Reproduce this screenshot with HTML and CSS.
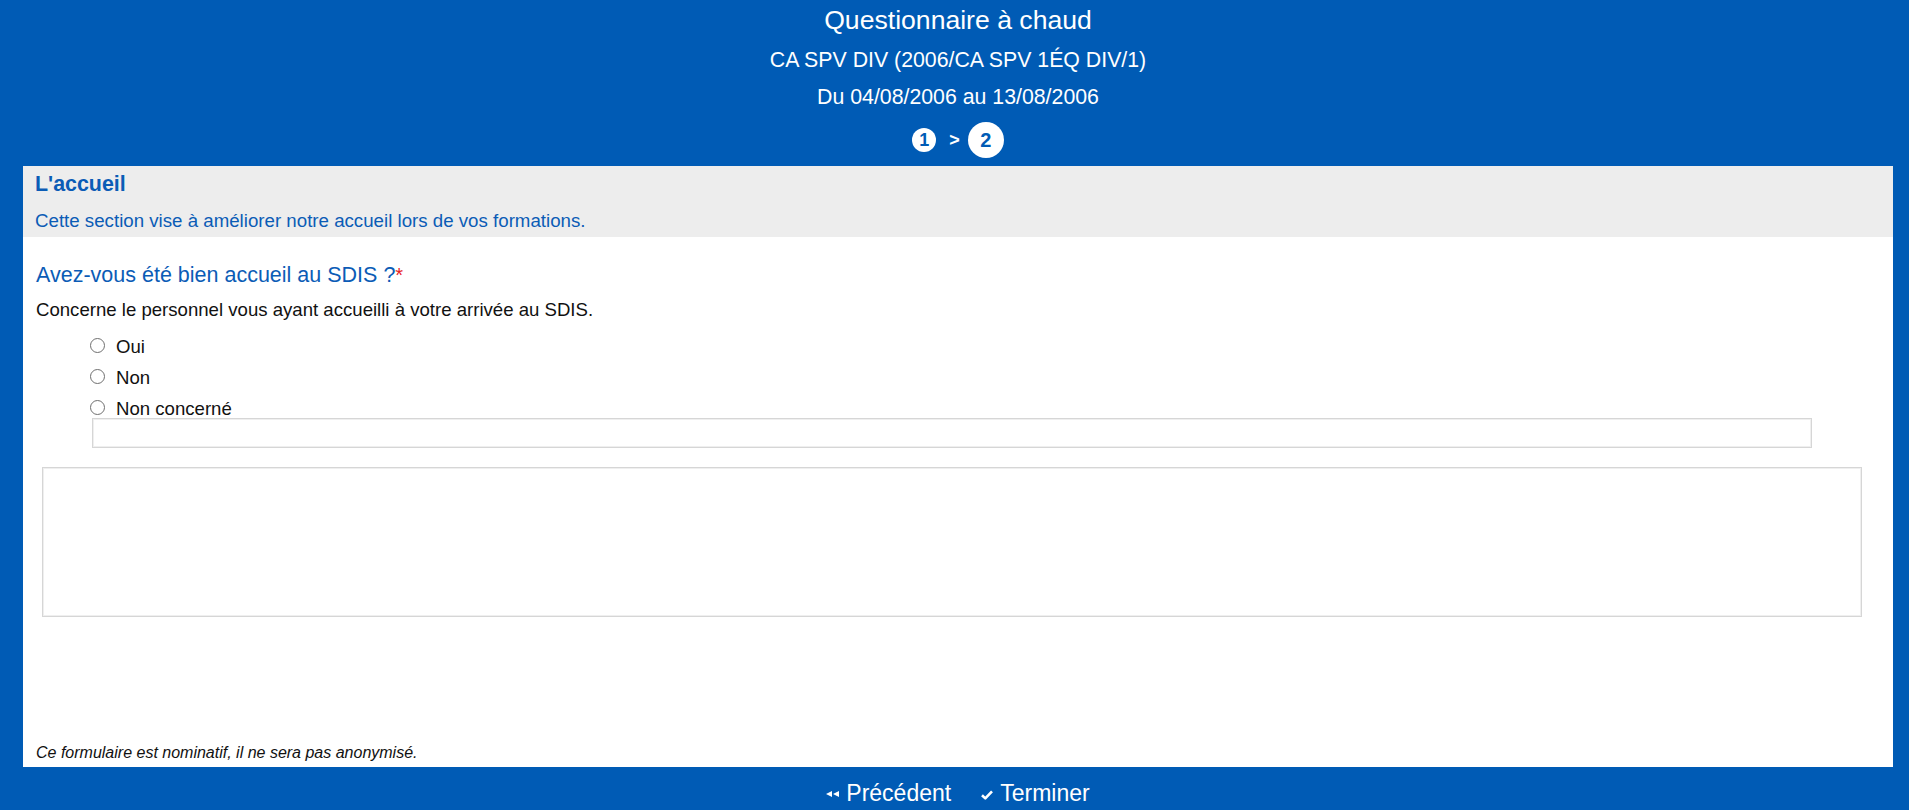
FILE: index.html
```html
<!DOCTYPE html>
<html lang="fr">
<head>
<meta charset="utf-8">
<title>Questionnaire à chaud</title>
<link rel="stylesheet" href="styles.css">
</head>
<body>
<div class="page">
  <header class="head">
    <h1 class="title">Questionnaire à chaud</h1>
    <p class="sub sub-first">CA SPV DIV (2006/CA SPV 1ÉQ DIV/1)</p>
    <p class="sub">Du 04/08/2006 au 13/08/2006</p>
    <div class="steps">
      <span class="step step-done">1</span>
      <span class="step-sep">&gt;</span>
      <span class="step step-current">2</span>
    </div>
  </header>

  <main class="card">
    <div class="section-head">
      <h2 class="section-title">L'accueil</h2>
      <p class="section-desc">Cette section vise à améliorer notre accueil lors de vos formations.</p>
    </div>

    <div class="question">
      <h3 class="q-title">Avez-vous été bien accueil au SDIS ?<span class="req">*</span></h3>
      <p class="q-help">Concerne le personnel vous ayant accueilli à votre arrivée au SDIS.</p>
      <div class="options">
        <label class="option"><input type="radio" name="q1" class="radio"><span>Oui</span></label>
        <label class="option"><input type="radio" name="q1" class="radio"><span>Non</span></label>
        <label class="option"><input type="radio" name="q1" class="radio"><span>Non concerné</span></label>
        <input type="text" class="other-input">
      </div>
      <textarea class="comment"></textarea>
    </div>

    <p class="notice">Ce formulaire est nominatif, il ne sera pas anonymisé.</p>
  </main>

  <nav class="nav">
    <a class="nav-btn" href="#">
      <svg class="ico-prev" width="13" height="6" viewBox="0 0 13 6"><polygon points="0,3 6,0 6,6" fill="#fff"/><polygon points="7,3 13,0 13,6" fill="#fff"/></svg>
      <span>Précédent</span>
    </a>
    <a class="nav-btn" href="#">
      <svg class="ico-check" width="12" height="10" viewBox="0 0 12 10"><path d="M1 5.2 L4.3 8.4 L11 1.4" fill="none" stroke="#fff" stroke-width="2.6" stroke-linejoin="round"/></svg>
      <span>Terminer</span>
    </a>
  </nav>
</div>
</body>
</html>
```
FILE: styles.css
```css
* { box-sizing: border-box; }

html, body {
  margin: 0;
  padding: 0;
  background: #005bb5;
  font-family: "Liberation Sans", Arial, sans-serif;
  height: 810px;
  overflow: hidden;
}

.page {
  padding: 0 16px 0 23px;
}

.head {
  text-align: center;
  color: #fff;
}

.title {
  margin: 0;
  font-size: 26.6px;
  font-weight: normal;
  line-height: 40px;
}

.sub {
  margin: 0;
  font-size: 21.3px;
  line-height: 37px;
}

.sub-first {
  margin-top: 2px;
}

.steps {
  display: flex;
  justify-content: center;
  align-items: center;
  height: 36px;
  margin-top: 6px;
  margin-bottom: 8px;
}

.step {
  display: flex;
  align-items: center;
  justify-content: center;
  background: #fff;
  color: #005bb5;
  font-weight: bold;
  border-radius: 50%;
}

.step-done {
  width: 24px;
  height: 24px;
  font-size: 18px;
}

.step-current {
  width: 36px;
  height: 36px;
  font-size: 20px;
}

.step-sep {
  color: #fff;
  font-weight: bold;
  font-size: 18px;
  margin: 0 8px 0 13px;
  line-height: 1;
}

.card {
  background: #fff;
  height: 601px;
  display: flex;
  flex-direction: column;
}

.section-head {
  background: #ededed;
  padding: 6px 12px 4px;
  color: #0b5cb6;
}

.section-title {
  margin: 0 0 13px;
  font-size: 21.4px;
  font-weight: bold;
  line-height: 24px;
}

.section-desc {
  margin: 0;
  font-size: 18.7px;
  line-height: 24px;
}

.question {
  padding: 0 13px;
}

.q-title {
  margin: 25px 0 0;
  font-size: 21.5px;
  font-weight: normal;
  line-height: 26px;
  color: #0b5cb6;
}

.req {
  color: #e8241f;
  font-size: 20px;
}

.q-help {
  margin: 10px 0 0;
  font-size: 18.6px;
  line-height: 24px;
  color: #111;
}

.options {
  display: flex;
  flex-direction: column;
  gap: 13px;
  padding: 16px 0 0 54px;
}

.option {
  display: flex;
  align-items: flex-start;
  height: 18px;
  font-size: 18.6px;
  line-height: 18px;
  color: #111;
}

.radio {
  appearance: none;
  -webkit-appearance: none;
  width: 15px;
  height: 15px;
  margin: -0.5px 11px 0 0;
  border: 1px solid #6f6f6f;
  border-radius: 50%;
  background: #fff;
  flex: none;
}

.other-input {
  display: block;
  width: 1720px;
  height: 30px;
  margin: -13px 0 0 2px;
  border: 1px solid #d6d6d6;
  box-shadow: inset 0 0 0 1px #efefef;
  background: #fff;
  padding: 0;
}

.comment {
  display: block;
  width: 1820px;
  height: 150px;
  margin: 19px 0 0 6px;
  border: 1px solid #d6d6d6;
  box-shadow: inset 0 0 0 1px #efefef;
  background: #fff;
  resize: none;
  padding: 0;
}

.notice {
  margin: auto 0 0;
  padding: 0 13px 5.5px;
  font-size: 16px;
  font-style: italic;
  line-height: 18px;
  color: #111;
}

.nav {
  display: flex;
  justify-content: center;
  align-items: center;
  gap: 30px;
  padding: 13px 0 4px;
}

.nav-btn {
  display: flex;
  align-items: center;
  gap: 7px;
  color: #fff;
  text-decoration: none;
  font-size: 23px;
  line-height: 26px;
}

.ico-prev {
  margin-top: 2px;
}

.ico-check {
  margin-top: 4px;
}
```
